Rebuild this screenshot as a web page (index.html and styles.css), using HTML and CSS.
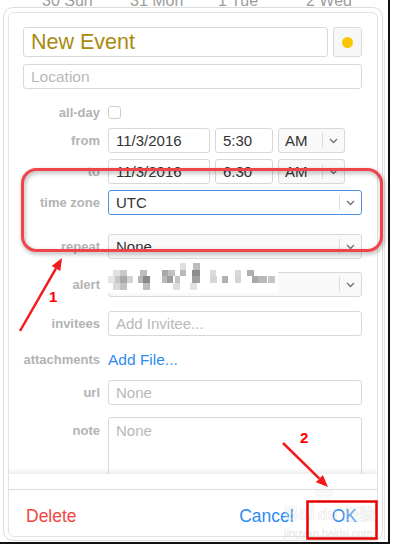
FILE: index.html
```html
<!DOCTYPE html>
<html>
<head>
<meta charset="utf-8">
<link rel="stylesheet" href="styles.css">
</head>
<body>
<div class="frame">
  <div class="cal-head"><span>30 Sun</span><span>31 Mon</span><span>1 Tue</span><span>2 Wed</span></div>
  <div class="cal-edge"></div>

  <div class="popover">
    <div class="panel">
      <div class="scroll">
        <div class="title-row">
          <div class="field title">New Event</div>
          <div class="color-btn"><span class="dot"></span></div>
        </div>
        <div class="field location ph">Location</div>

        <div class="row allday"><span class="lbl">all-day</span><span class="checkbox"></span></div>

        <div class="row from">
          <span class="lbl">from</span>
          <div class="field date">11/3/2016</div>
          <div class="field time">5:30</div>
          <div class="field select ampm"><span class="val">AM</span><span class="chev"><svg width="9" height="6" viewBox="0 0 9 6"><polyline points="1,1 4.5,4.5 8,1"/></svg></span></div>
        </div>
        <div class="row to">
          <span class="lbl">to</span>
          <div class="field date">11/3/2016</div>
          <div class="field time">6:30</div>
          <div class="field select ampm"><span class="val">AM</span><span class="chev"><svg width="9" height="6" viewBox="0 0 9 6"><polyline points="1,1 4.5,4.5 8,1"/></svg></span></div>
        </div>
        <div class="row tz">
          <span class="lbl">time zone</span>
          <div class="field select wide focus"><span class="val">UTC</span><span class="chev"><svg width="9" height="6" viewBox="0 0 9 6"><polyline points="1,1 4.5,4.5 8,1"/></svg></span></div>
        </div>
        <div class="row repeat">
          <span class="lbl">repeat</span>
          <div class="field select wide"><span class="val">None</span><span class="chev"><svg width="9" height="6" viewBox="0 0 9 6"><polyline points="1,1 4.5,4.5 8,1"/></svg></span></div>
        </div>
        <div class="row alert">
          <span class="lbl">alert</span>
          <div class="field select wide"><span class="val">None</span><span class="chev"><svg width="9" height="6" viewBox="0 0 9 6"><polyline points="1,1 4.5,4.5 8,1"/></svg></span>
            <svg class="mosaic" width="173" height="31" viewBox="0 0 173 31">
              <rect x="0" y="0" width="173" height="31" fill="#ffffff"/>
              <rect x="75" y="1" width="6" height="7" fill="#dedede"/>
              <rect x="88" y="1" width="7" height="7" fill="#bbbbbb"/>
              <rect x="8" y="8" width="7" height="6" fill="#e0e0e0"/>
              <rect x="15" y="8" width="7" height="6" fill="#c8c8c8"/>
              <rect x="35" y="8" width="7" height="6" fill="#bdbdbd"/>
              <rect x="57" y="8" width="6" height="6" fill="#a8a8a8"/>
              <rect x="63" y="8" width="7" height="6" fill="#c0c0c0"/>
              <rect x="75" y="8" width="6" height="6" fill="#b8b8b8"/>
              <rect x="87" y="8" width="8" height="6" fill="#8c8c8c"/>
              <rect x="105" y="8" width="6" height="6" fill="#dcdcdc"/>
              <rect x="130" y="8" width="6" height="6" fill="#d8d8d8"/>
              <rect x="142" y="8" width="7" height="6" fill="#b0b0b0"/>
              <rect x="3" y="14" width="7" height="7" fill="#e4e4e4"/>
              <rect x="10" y="14" width="5" height="7" fill="#c6c6c6"/>
              <rect x="15" y="14" width="7" height="7" fill="#a9a9a9"/>
              <rect x="22" y="14" width="6" height="7" fill="#d2d2d2"/>
              <rect x="33" y="14" width="5" height="7" fill="#b5b5b5"/>
              <rect x="38" y="14" width="7" height="7" fill="#888888"/>
              <rect x="57" y="14" width="5" height="7" fill="#b9b9b9"/>
              <rect x="62" y="14" width="6" height="7" fill="#9e9e9e"/>
              <rect x="70" y="14" width="5" height="7" fill="#c4c4c4"/>
              <rect x="87" y="14" width="8" height="7" fill="#a0a0a0"/>
              <rect x="105" y="14" width="7" height="7" fill="#d6d6d6"/>
              <rect x="117" y="14" width="6" height="7" fill="#b2b2b2"/>
              <rect x="130" y="14" width="6" height="7" fill="#d4d4d4"/>
              <rect x="147" y="14" width="6" height="7" fill="#a8a8a8"/>
              <rect x="153" y="14" width="9" height="7" fill="#b8b8b8"/>
              <rect x="163" y="14" width="7" height="7" fill="#c4c4c4"/>
              <rect x="8" y="21" width="7" height="7" fill="#dadada"/>
              <rect x="15" y="21" width="7" height="7" fill="#c2c2c2"/>
              <rect x="38" y="21" width="7" height="7" fill="#bdbdbd"/>
              <rect x="68" y="21" width="7" height="7" fill="#dedede"/>
              <rect x="85" y="21" width="7" height="7" fill="#e2e2e2"/>
            </svg>
          </div>
        </div>
        <div class="row invitees">
          <span class="lbl">invitees</span>
          <div class="field wide ph">Add Invitee...</div>
        </div>
        <div class="row attach">
          <span class="lbl">attachments</span>
          <span class="link">Add File...</span>
        </div>
        <div class="row url">
          <span class="lbl">url</span>
          <div class="field wide ph">None</div>
        </div>
        <div class="row note">
          <span class="lbl">note</span>
          <div class="field wide textarea ph">None</div>
        </div>
      </div>
      <div class="footer-gap"></div>
      <div class="footer">
        <span class="delete">Delete</span>
        <span class="spacer"></span>
        <span class="cancel">Cancel</span>
        <span class="ok">OK</span>
      </div>
    </div>
  </div>

  <svg class="annot" width="400" height="547" viewBox="0 0 400 547">
    <g class="wm">
      <circle cx="318" cy="493" r="2.5"/><circle cx="324" cy="490" r="2.5"/><circle cx="330" cy="493" r="2.5"/>
      <ellipse cx="324" cy="499" rx="5" ry="4"/>
      <text x="284" y="520" class="wm-big">Bai</text>
      <text x="318" y="520" class="wm-mid">du</text>
      <text x="343" y="520" class="wm-mid">经验</text>
      <text x="284" y="537" class="wm-small">jingyan.baidu.com</text>
    </g>
    <rect class="hl" x="22.5" y="169.5" width="359" height="81" rx="14" ry="14"/>
    <line class="arrow" x1="20" y1="331" x2="56" y2="268.4"/>
    <polygon class="head" points="62,258 60.3,270.9 51.7,265.9"/>
    <text class="num" x="49" y="302">1</text>
    <line class="arrow" x1="283" y1="443" x2="319.4" y2="478.6"/>
    <polygon class="head" points="328,487 315.9,482.2 322.9,475"/>
    <text class="num" x="300" y="443">2</text>
    <rect class="okbox" x="307.5" y="501.5" width="69" height="37"/>
  </svg>
</div>
</body>
</html>
```

FILE: styles.css
```css
html, body {
  margin: 0;
  padding: 0;
  background: #fff;
  width: 400px;
  height: 547px;
  overflow: hidden;
  font-family: "Liberation Sans", Arial, sans-serif;
}

.frame {
  position: relative;
  width: 388px;
  height: 542px;
  border-right: 2px solid #111;
  border-bottom: 2px solid #111;
  overflow: hidden;
  background: #fff;
}

.cal-head {
  display: flex;
  padding-left: 42px;
  margin-top: -8px;
  font-size: 16px;
  color: #9d9d9d;
}
.cal-head span {
  flex: none;
  width: 88px;
}

.cal-edge {
  position: absolute;
  left: 384px;
  top: 40px;
  width: 1px;
  height: 500px;
  background: #e3e3e3;
}

.popover {
  position: absolute;
  left: 3px;
  top: 7px;
  width: 380px;
  height: 534px;
  box-sizing: border-box;
  padding: 4px 4px 3px 4px;
  border: 1px solid #dcdcdc;
  border-radius: 10px;
  background: #fff;
}

.panel {
  height: 100%;
  box-sizing: border-box;
  border: 1px solid #e3e3e3;
  border-radius: 6px;
  display: flex;
  flex-direction: column;
  overflow: hidden;
}

.scroll {
  flex: none;
  height: 461px;
  overflow: hidden;
  padding: 14px 15px 0 14px;
  box-sizing: border-box;
  box-shadow: inset 0 -7px 6px -6px rgba(0, 0, 0, 0.12);
  display: flex;
  flex-direction: column;
}

.field {
  box-sizing: border-box;
  height: 25px;
  border: 1px solid #d8d8d8;
  border-radius: 3px;
  background: #fff;
  font-size: 15px;
  line-height: 23px;
  color: #333;
  padding-left: 7px;
  white-space: nowrap;
  flex: none;
}
.ph { color: #b9b9b9; }

.title-row {
  display: flex;
  gap: 5px;
  height: 30px;
  flex: none;
}
.field.title {
  flex: 1;
  height: 30px;
  font-size: 21.5px;
  line-height: 29px;
  color: #a88a0f;
}
.color-btn {
  width: 29px;
  height: 30px;
  box-sizing: border-box;
  border: 1px solid #dadada;
  border-radius: 3px;
  background: #f7f7f7;
  display: flex;
  align-items: center;
  justify-content: center;
}
.dot {
  width: 11px;
  height: 11px;
  border-radius: 50%;
  background: #f8c600;
}

.field.location {
  margin-top: 7px;
  font-size: 15.5px;
}

.row {
  display: flex;
  align-items: center;
  gap: 5px;
  height: 25px;
  flex: none;
}
.lbl {
  width: 77px;
  margin-right: 3px;
  text-align: right;
  font-size: 13px;
  font-weight: bold;
  color: #b3b3b3;
  flex: none;
}

.allday { margin-top: 11px; }
.checkbox {
  width: 13px;
  height: 13px;
  box-sizing: border-box;
  border: 1px solid #cfcfcf;
  border-radius: 3px;
  background: #fff;
}
.from { margin-top: 3px; }
.to { margin-top: 6px; }
.tz { margin-top: 6px; }
.repeat { margin-top: 19px; }
.alert { margin-top: 13px; }
.invitees { margin-top: 14px; }
.attach { margin-top: 11px; }
.url { margin-top: 8px; }
.note { margin-top: 12px; align-items: flex-start; height: 80px; }
.note .lbl { margin-top: 6px; }

.field.date { width: 102px; }
.field.time { width: 58px; }

.field.select {
  display: flex;
  align-items: center;
  padding-left: 0;
  background: #f9f9f9;
  position: relative;
}
.select .val {
  flex: 1;
  padding-left: 6px;
}
.select .chev {
  flex: none;
  width: 21px;
  height: 15px;
  border-left: 1px solid #dcdcdc;
  display: flex;
  align-items: center;
  justify-content: center;
}
.chev svg polyline {
  fill: none;
  stroke: #6e6e6e;
  stroke-width: 1.3;
}
.field.ampm { width: 67px; }
.field.wide { width: 254px; }
.select.wide .val { padding-left: 7px; }
.field.focus {
  border-color: #4d94e6;
  background: #fff;
}

.mosaic {
  position: absolute;
  left: -4px;
  top: -11px;
}

.link {
  font-size: 15.5px;
  color: #2f8cf2;
}

.field.textarea {
  height: 80px;
  line-height: 20px;
  padding-top: 3px;
  background: transparent;
}

.footer-gap {
  flex: none;
  height: 15px;
}
.footer {
  flex: 1;
  border-top: 1px solid #dcdcdc;
  display: flex;
  align-items: center;
  padding: 6px 20px 0 17px;
  font-size: 17.5px;
}
.spacer { flex: 1; }
.delete { color: #f4463f; }
.cancel { color: #2c8cf2; margin-right: 38px; }
.ok { color: #2c8cf2; }

.annot {
  position: absolute;
  left: 0;
  top: 0;
  pointer-events: none;
}
.hl {
  fill: none;
  stroke: #f0434a;
  stroke-width: 3;
  filter: drop-shadow(1px 2px 2px rgba(0, 0, 0, 0.35));
}
.arrow {
  stroke: #f21a1a;
  stroke-width: 2.5;
}
.head { fill: #f21a1a; }
.num {
  font-family: "Liberation Sans", Arial, sans-serif;
  font-weight: bold;
  font-size: 15px;
  fill: #f00;
}
.okbox {
  fill: none;
  stroke: #e80000;
  stroke-width: 2.5;
}
.wm {
  opacity: 0.35;
  fill: #f4f4f4;
  stroke: #c8c8c8;
  stroke-width: 0.7;
}
.wm-big {
  font-family: "Liberation Sans", Arial, sans-serif;
  font-size: 20px;
  font-weight: bold;
}
.wm-mid {
  font-family: "Liberation Sans", "Noto Sans CJK SC", sans-serif;
  font-size: 16px;
  font-weight: bold;
}
.wm-small {
  font-family: "Liberation Sans", Arial, sans-serif;
  font-size: 11px;
}
```
